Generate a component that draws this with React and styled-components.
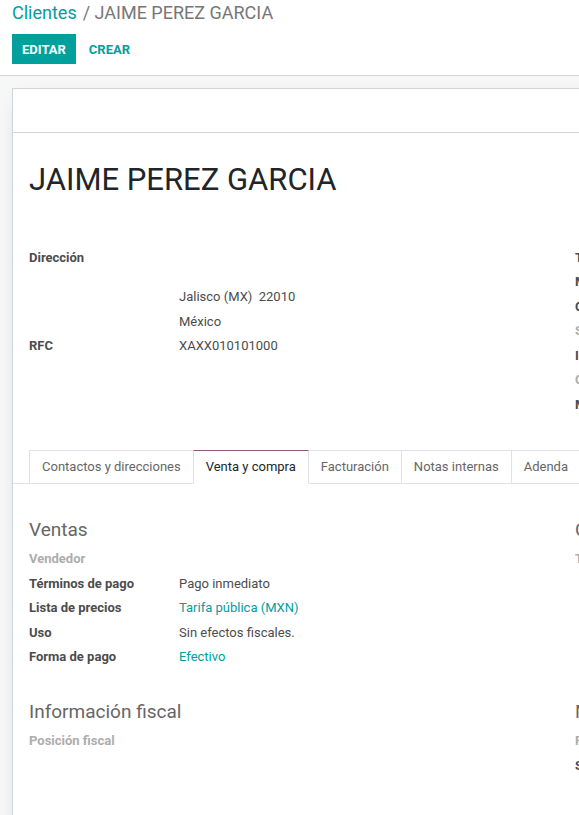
import styled, { createGlobalStyle } from "styled-components";

const GlobalStyle = createGlobalStyle`
  html, body {
    margin: 0;
    padding: 0;
    overflow: hidden;
    background: #ffffff;
  }
  body {
    font-family: "Roboto", "Liberation Sans", sans-serif;
    font-size: 13px;
    color: #4c4c4c;
  }
  * {
    box-sizing: border-box;
  }
`;

const ControlPanel = styled.div`
  height: 76px;
  padding: 0 12px;
  background: #ffffff;
  border-bottom: 1px solid #d2d2d2;
`;

const Breadcrumb = styled.div`
  height: 26px;
  display: flex;
  align-items: center;
  font-size: 18px;
  line-height: 26px;
  white-space: nowrap;
`;

const BreadcrumbLink = styled.span`
  color: #00a09d;
`;

const BreadcrumbCurrent = styled.span`
  color: #777777;
  margin-left: 6px;
`;

const ButtonRow = styled.div`
  margin-top: 8px;
  display: flex;
  align-items: center;
  gap: 3px;
`;

const Button = styled.button`
  height: 30px;
  padding: 0 10px;
  border: none;
  border-radius: 0;
  font-family: "Roboto", "Liberation Sans", sans-serif;
  font-size: 13px;
  font-weight: 700;
  text-transform: uppercase;
  cursor: pointer;
  background: ${({ primary }) => (primary ? "#00a09d" : "transparent")};
  color: ${({ primary }) => (primary ? "#ffffff" : "#00a09d")};
`;

const SheetBackground = styled.div`
  min-height: 740px;
  padding: 12px 0 0 12px;
  background: #f7f7f7;
`;

const Sheet = styled.div`
  width: 1126px;
  min-height: 760px;
  background: #ffffff;
  border: 1px solid #ced4da;
  box-shadow: 0 5px 20px -12px rgba(0, 0, 0, 0.35);
`;

const StatusBar = styled.div`
  height: 44px;
  border-bottom: 1px solid #ced4da;
`;

const SheetBody = styled.div`
  padding: 28px 16px 40px 16px;
`;

const Title = styled.h1`
  margin: 0;
  font-size: 31px;
  line-height: 37px;
  font-weight: 400;
  color: #212529;
`;

const TwoColumns = styled.div`
  display: grid;
  grid-template-columns: 1fr 1fr;
  margin-top: ${({ top }) => top || "0"};
`;

const Group = styled.div`
  display: flex;
  flex-direction: column;
`;

const FieldRow = styled.div`
  display: grid;
  grid-template-columns: 150px 1fr;
  align-items: start;
  min-height: 24.5px;
  line-height: 19.5px;
  padding: 2.5px 0;
  white-space: nowrap;
`;

const Label = styled.span`
  font-weight: 700;
  color: ${({ empty }) => (empty ? "#adadad" : "#4c4c4c")};
`;

const Value = styled.span`
  color: ${({ link }) => (link ? "#00a09d" : "#4c4c4c")};
`;

const AddressLines = styled.div`
  display: flex;
  flex-direction: column;
  padding-top: 37px;
  margin-bottom: -3px;
`;

const AddressLine = styled.span`
  height: 24.5px;
  line-height: 19.5px;
  padding-top: 2.5px;
`;

const Notebook = styled.div`
  margin: 33px -16px 0 -16px;
`;

const TabList = styled.div`
  display: flex;
  padding-left: 16px;
  border-bottom: 1px solid #dee2e6;
`;

const Tab = styled.div`
  height: 34px;
  padding: 0 12px;
  margin-right: -1px;
  margin-bottom: -1px;
  display: flex;
  align-items: center;
  white-space: nowrap;
  font-size: 13px;
  background: #ffffff;
  border: 1px solid #dee2e6;
  border-top-color: ${({ active }) => (active ? "#875a7b" : "#dee2e6")};
  border-bottom-color: ${({ active }) => (active ? "#ffffff" : "#dee2e6")};
  color: ${({ active }) => (active ? "#212529" : "#666666")};
  position: relative;
  z-index: ${({ active }) => (active ? 1 : 0)};
`;

const TabPane = styled.div`
  padding: 32px 16px 0 16px;
`;

const Separator = styled.div`
  font-size: 19px;
  line-height: 28.5px;
  color: #666666;
  margin-bottom: 2.5px;
  white-space: nowrap;
`;

function Field({ label, value, empty, link }) {
  return (
    <FieldRow>
      <Label empty={empty}>{label}</Label>
      <Value link={link}>{value}</Value>
    </FieldRow>
  );
}

const contactFields = [
  { label: "Teléfono", value: "" },
  { label: "Móvil", value: "" },
  { label: "Correo electrónico", value: "" },
  { label: "Sitio web", value: "", empty: true },
  { label: "Idioma", value: "Español (MX)" },
  { label: "Categorías", value: "", empty: true },
  { label: "Moneda", value: "MXN" },
];

const tabs = [
  "Contactos y direcciones",
  "Venta y compra",
  "Facturación",
  "Notas internas",
  "Adenda",
];

export default function App() {
  return (
    <>
      <GlobalStyle />
      <ControlPanel>
        <Breadcrumb>
          <BreadcrumbLink>Clientes</BreadcrumbLink>
          <BreadcrumbCurrent>/ JAIME PEREZ GARCIA</BreadcrumbCurrent>
        </Breadcrumb>
        <ButtonRow>
          <Button primary>Editar</Button>
          <Button>Crear</Button>
        </ButtonRow>
      </ControlPanel>
      <SheetBackground>
        <Sheet>
          <StatusBar />
          <SheetBody>
            <Title>JAIME PEREZ GARCIA</Title>
            <TwoColumns top="47px">
              <Group>
                <FieldRow>
                  <Label>Dirección</Label>
                  <AddressLines>
                    <AddressLine>Jalisco (MX)&nbsp; 22010</AddressLine>
                    <AddressLine>México</AddressLine>
                  </AddressLines>
                </FieldRow>
                <Field label="RFC" value="XAXX010101000" />
              </Group>
              <Group>
                {contactFields.map((f) => (
                  <Field key={f.label} {...f} />
                ))}
              </Group>
            </TwoColumns>
            <Notebook>
              <TabList>
                {tabs.map((t) => (
                  <Tab key={t} active={t === "Venta y compra"}>
                    {t}
                  </Tab>
                ))}
              </TabList>
              <TabPane>
                <TwoColumns>
                  <Group>
                    <Separator>Ventas</Separator>
                    <Field label="Vendedor" value="" empty />
                    <Field label="Términos de pago" value="Pago inmediato" />
                    <Field
                      label="Lista de precios"
                      value="Tarifa pública (MXN)"
                      link
                    />
                    <Field label="Uso" value="Sin efectos fiscales." />
                    <Field label="Forma de pago" value="Efectivo" link />
                  </Group>
                  <Group>
                    <Separator>Compra</Separator>
                    <Field label="Términos de pago" value="" empty />
                  </Group>
                </TwoColumns>
                <TwoColumns top="28.5px">
                  <Group>
                    <Separator>Información fiscal</Separator>
                    <Field label="Posición fiscal" value="" empty />
                  </Group>
                  <Group>
                    <Separator>Misc</Separator>
                    <Field label="Referencia" value="" empty />
                    <Field label="Sector" value="" />
                  </Group>
                </TwoColumns>
              </TabPane>
            </Notebook>
          </SheetBody>
        </Sheet>
      </SheetBackground>
    </>
  );
}
